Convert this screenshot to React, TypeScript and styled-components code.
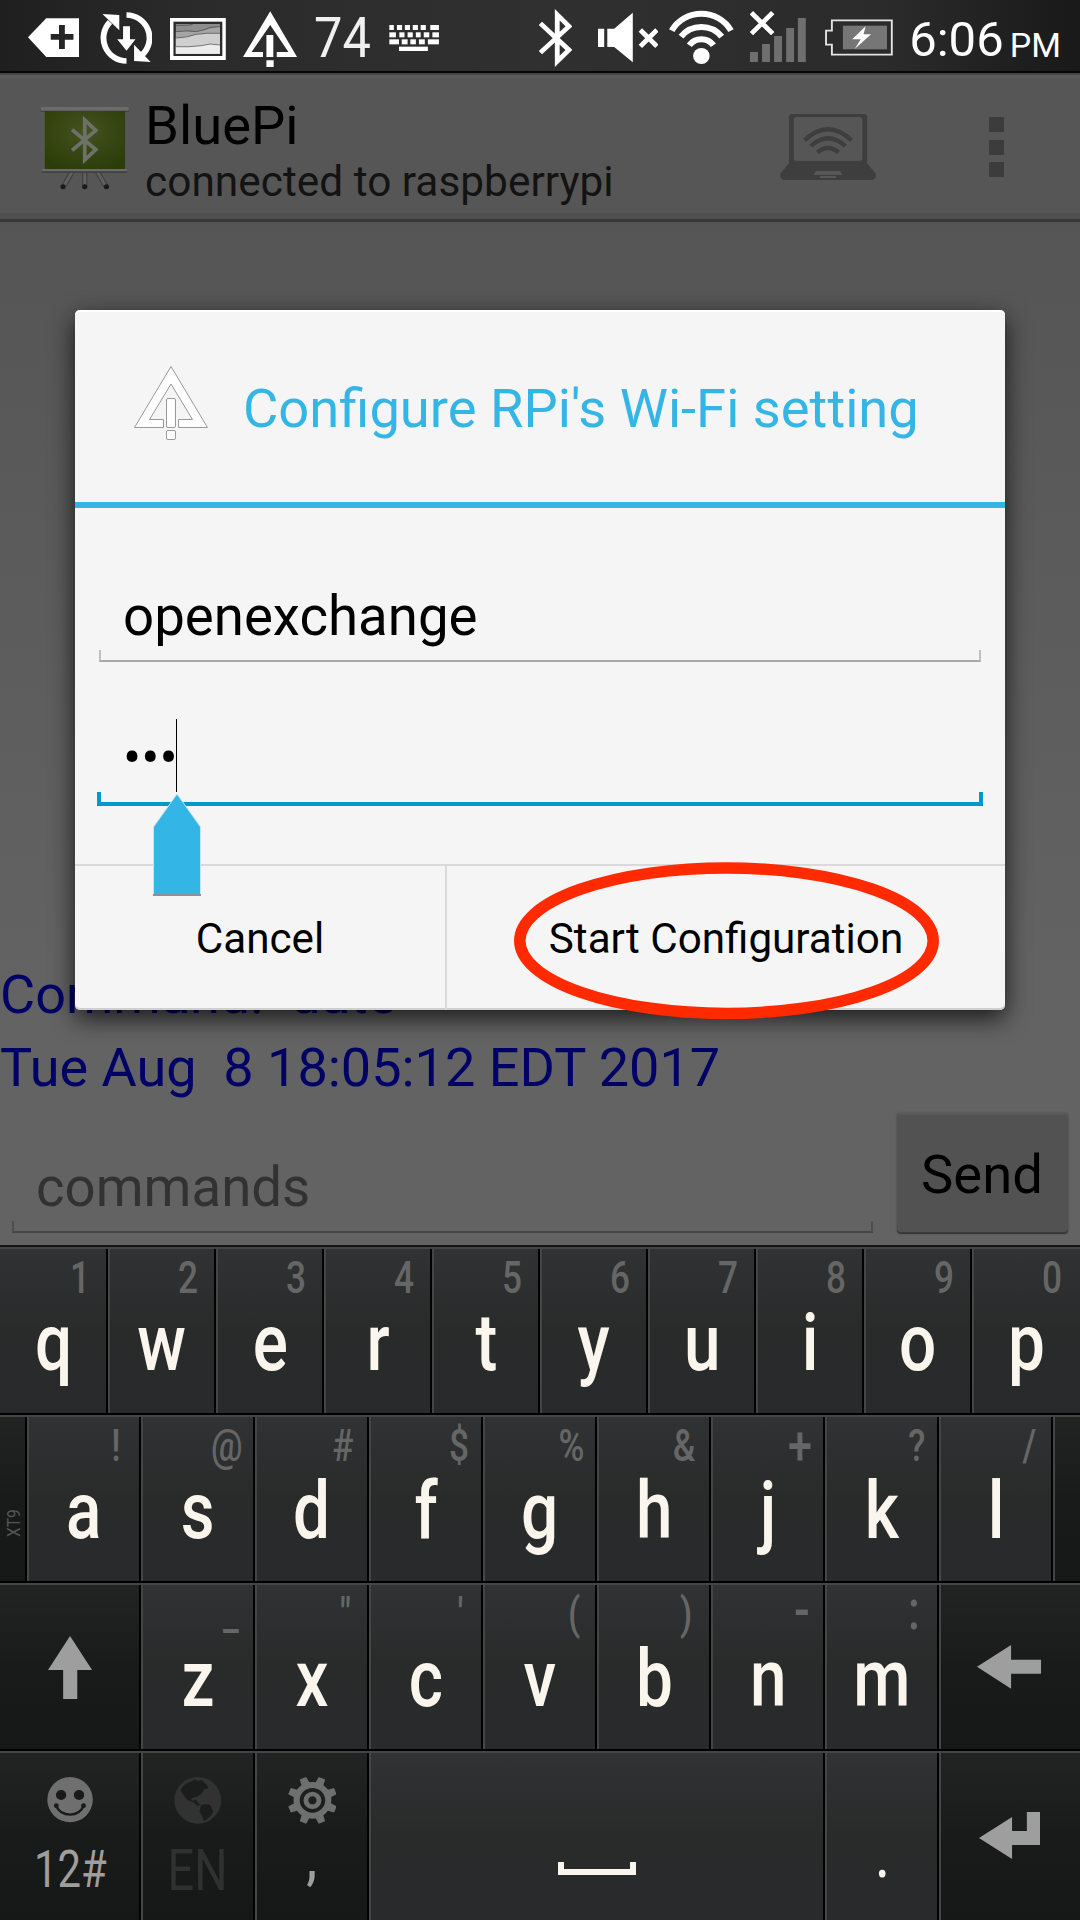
import React from "react";
import styled, { createGlobalStyle } from "styled-components";

const GlobalStyle = createGlobalStyle`
  * { box-sizing: border-box; }
  body { margin: 0; background: #1a1b1b; }
`;

const Screen = styled.div`
  position: relative;
  width: 1080px;
  height: 1920px;
  overflow: hidden;
  display: flex;
  flex-direction: column;
  font-family: Roboto, "Noto Sans", sans-serif;
  background: linear-gradient(#555 222px, #636363 1000px);
`;

/* ---------- drawings ---------- */

const Svg = styled.svg<{ $left?: number; $top?: number }>`
  display: block;
  flex: none;
  margin-left: ${(p) => p.$left ?? 0}px;
  margin-top: ${(p) => p.$top ?? 0}px;
`;

type DrawingProps = {
  box: [number, number, number, number];
  left?: number;
  top?: number;
  fill?: string;
  children: React.ReactNode;
};

/* Drawings use a fine grid: 2.9037 units per px across, 3 units per px down. */
const Drawing = ({ box, left, top, fill = "#fff", children }: DrawingProps) => (
  <Svg
    $left={left}
    $top={top}
    width={box[2] / 2.9037}
    height={box[3] / 3}
    viewBox={box.join(" ")}
    preserveAspectRatio="none"
    fill={fill}
  >
    {children}
  </Svg>
);

/* ---------- status bar ---------- */

const StatusBar = styled.header`
  height: 75px;
  flex: none;
  display: flex;
  align-items: flex-start;
  background: linear-gradient(
      transparent 71px,
      #060606 71px,
      #060606 73px,
      #464646 73px
    ),
    linear-gradient(90deg, #1f1f1f, #2b2b2b 18%, #303030 50%, #2b2b2b 82%, #191919);
`;

const StatusText = styled.span<{ $size: number; $left: number; $width: number; $x?: number; $color?: string }>`
  flex: none;
  width: ${(p) => p.$width}px;
  margin-left: ${(p) => p.$left}px;
  font-size: ${(p) => p.$size}px;
  line-height: ${(p) => 2 * (56.8 - 0.3418 * p.$size)}px;
  color: ${(p) => p.$color ?? "#fff"};
  white-space: nowrap;
  transform: scaleX(${(p) => p.$x ?? 1});
  transform-origin: left;
`;

const keyboardDots = [
  [1131, 75, 13], [1153, 75, 15], [1176, 75, 15], [1199, 75, 15], [1222, 75, 15], [1250, 75, 25],
  [1131, 97, 19], [1160, 97, 15], [1184, 97, 15], [1208, 97, 14], [1231, 97, 16], [1256, 97, 19],
  [1131, 118, 28], [1167, 118, 17], [1192, 118, 16], [1217, 118, 17], [1243, 118, 32],
  [1159, 140, 84],
];

const StatusIcons = () => (
  <StatusBar>
    <Drawing left={27.9} box={[81, 0, 148, 213]}>
      <path d="M81 112L134 55H229V171H134Z" />
      <path d="M171 75h17v27h25v17h-25v28h-17v-28h-24v-17h24z" fill="#262626" />
    </Drawing>
    <Drawing left={20.7} box={[289, 0, 153, 213]}>
      <path d="M366 45A67 69 0 0 1 412 164M366 183A67 69 0 0 1 318 66" fill="none" stroke="#fff" strokeWidth="17" />
      <path d="M388 134V183L436 186Z M296 42L345 45V91Z M356 79h20v39h16L366 152L339 118h17z" />
    </Drawing>
    <Drawing left={17.9} box={[494, 0, 163, 213]}>
      <rect x="494" y="54" width="162" height="126" />
      <rect x="504" y="65" width="142" height="103" fill="#2a2a2a" />
      <rect x="511" y="72" width="128" height="89" fill="#8d8d8d" />
      <path d="M511 95Q545 92 570 95Q595 90 639 80V161H511Z" fill="#a5a5a5" />
      <path d="M511 114Q545 113 570 103Q600 98 639 100V161H511Z" fill="#cfcfcf" />
      <path d="M511 140Q545 142 585 137Q610 128 639 135V161H511Z" fill="#ececec" />
      <path
        d="M511 76H545L560 73M511 95Q545 90 570 95Q595 90 610 82L639 80M511 114Q545 113 570 103Q600 98 639 100M511 140Q545 142 585 137Q610 128 639 135"
        fill="none" stroke="#444" strokeWidth="2"
      />
    </Drawing>
    <Drawing left={16.9} box={[706, 0, 158, 213]}>
      <path d="M785 34L863 171H804V156H838L785 75L731 156H764V171H706Z" />
      <path d="M774 105h20v66h-20zM774 181h21v20h-21z" />
    </Drawing>
    <StatusText $size={55} $left={16.5} $width={60} $x={0.92} $color="#f0f0f0">74</StatusText>
    <Drawing left={15} box={[1130, 0, 146, 213]}>
      {keyboardDots.map(([x, y, w]) => (
        <rect key={`${x}-${y}`} x={x} y={y} width={w} height={y === 140 ? 13 : 15} />
      ))}
    </Drawing>
    <Drawing left={99.3} box={[-8, 0, 98, 213]}>
      <path d="M-4 70L79 150L45 184V44L79 79L-4 158" fill="none" stroke="#fff" strokeWidth="14" />
    </Drawing>
    <Drawing left={25.4} box={[168, 0, 176, 213]}>
      <path d="M168 86h18v55h-18zM195 86h20L269 38V187L215 141h-20z" />
      <path d="M291 90L339 139M339 90L291 139" stroke="#fff" strokeWidth="14" />
    </Drawing>
    <Drawing left={10.6} box={[373, 0, 188, 213]}>
      <path
        d="M381 92A98 98 0 0 1 553 92M408 110A75 75 0 0 1 526 110M432 136A43 43 0 0 1 502 136"
        fill="none" stroke="#fff" strokeWidth="18"
      />
      <circle cx="467" cy="168" r="24" />
    </Drawing>
    <Drawing left={15.9} box={[607, 0, 163, 213]}>
      <path
        d="M607 156h23v30h-23zM642 132h23v54h-23zM677 108h23v78h-23zM712 84h23v102h-23zM746 54h23v132h-23z"
        fill="#6f6f6f"
      />
      <path d="M611 38L673 101M673 38L611 101" stroke="#2b2b2b" strokeWidth="22" />
      <path d="M611 38L673 101M673 38L611 101" stroke="#fff" strokeWidth="14" />
    </Drawing>
    <Drawing left={19.3} box={[828, 0, 198, 213]}>
      <path d="M848 61H1022V164H848V134H831V92H848Z" fill="none" stroke="#e3e3e3" strokeWidth="5.5" />
      <rect x="880" y="77" width="128" height="71" fill="#767676" />
      <path d="M946 79L907 118H932L914 147L962 103H940Z" />
    </Drawing>
    <StatusText $size={49} $left={16} $width={98}>6:06</StatusText>
    <StatusText $size={34} $left={2.5} $width={60}>PM</StatusText>
  </StatusBar>
);

/* ---------- action bar ---------- */

const ActionBar = styled.div`
  height: 147px;
  flex: none;
  display: flex;
  align-items: flex-start;
  background: linear-gradient(
    #5b5b5b 3px,
    #565656 3px,
    #565656 138px,
    #505050 138px,
    #505050 144px,
    #383838 144px
  );
`;

const Titles = styled.div`
  width: 599px;
  padding-top: 19px;
  margin-left: 15px;
  flex: none;
`;

const Title = styled.div`
  font-size: 54.4px;
  line-height: 64px;
  color: #000;
`;

const Subtitle = styled.div`
  font-size: 42.4px;
  line-height: 48px;
  color: #131313;
  white-space: nowrap;
`;

const Overflow = styled.div`
  display: flex;
  flex-direction: column;
  gap: 7.5px;
  margin: 42px 0 0 113px;
  i {
    width: 15px;
    height: 15px;
    background: #3c3c3c;
  }
`;

const AppBar = () => (
  <ActionBar>
    <Drawing left={40.2} top={29} box={[117, 312, 261, 264]}>
      <defs>
        <radialGradient id="board" cx="50%" cy="35%" r="70%">
          <stop offset="0" stopColor="#44521f" />
          <stop offset="1" stopColor="#2b3d08" />
        </radialGradient>
      </defs>
      <path d="M210 516L186 558M247 516V558M284 516L308 558" stroke="#3d3d3d" strokeWidth="15" />
      <path d="M210 516L186 558M247 516V558M284 516L308 558" stroke="#5f5f5f" strokeWidth="9" />
      <path d="M119 325h256v10h-256zM123 511h247v7h-247z" fill="#3c3c3c" />
      <rect x="131" y="333" width="233" height="175" fill="url(#board)" />
      <rect x="119" y="321" width="256" height="11" rx="2" fill="#6b6b6b" />
      <rect x="123" y="507" width="247" height="7" rx="2" fill="#6b6b6b" />
      <circle cx="184" cy="560" r="7.5" fill="#1a1a1a" />
      <circle cx="247" cy="560" r="7.5" fill="#1a1a1a" />
      <circle cx="310" cy="560" r="7.5" fill="#1a1a1a" />
      <path d="M210 389L279 449L247 480V360L279 391L210 451" fill="none" stroke="#6e7168" strokeWidth="11" />
    </Drawing>
    <Titles>
      <Title>BluePi</Title>
      <Subtitle>connected to raspberrypi</Subtitle>
    </Titles>
    <Drawing left={35.5} top={39} box={[697, 342, 280, 198]} fill="#3e3e3e">
      <path d="M733 342H940Q950 342 950 352V490L974 520Q980 532 965 540H708Q693 532 699 520L723 490V352Q723 342 733 342Z" />
      <rect x="737" y="351" width="199" height="132" rx="9" fill="#565656" />
      <path
        d="M768 421Q836 355 905 421M787 438Q836 391 887 438M806 457Q836 431 867 457"
        fill="none" stroke="#3e3e3e" strokeWidth="13"
      />
      <path d="M801 513H872L878 525H794ZM813 528H860V534H813Z" fill="#575757" />
    </Drawing>
    <Overflow><i /><i /><i /></Overflow>
  </ActionBar>
);

/* ---------- console ---------- */

const Console = styled.main`
  flex: 1;
  display: flex;
  flex-direction: column;
  justify-content: flex-end;
  color: #000066;
  font-size: 54px;
  line-height: 73px;
  white-space: pre;
`;

const Composer = styled.div`
  height: 141px;
  flex: none;
  display: flex;
  padding: 9px 12px 12px;
  gap: 24px;
`;

const Input = styled.div`
  width: 861px;
  display: flex;
  flex-direction: column;
  justify-content: flex-end;
`;

const InputText = styled.div<{ $color: string; $height: number }>`
  height: ${(p) => p.$height}px;
  line-height: ${(p) => p.$height}px;
  font-size: 54.6px;
  color: ${(p) => p.$color};
  padding-left: 24px;
`;

const Underline = styled.div<{ $color: string; $side?: string; $size: number }>`
  height: ${(p) => (p.$size === 4 ? 14 : 12)}px;
  border: solid ${(p) => p.$side ?? p.$color};
  border-width: 0 ${(p) => p.$size}px ${(p) => p.$size}px;
  border-bottom-color: ${(p) => p.$color};
`;

const SendButton = styled.button`
  width: 171px;
  height: 120px;
  border: 0;
  border-radius: 4px;
  background: #525252;
  box-shadow: inset 0 2px #595959, inset 0 -1px #3a3a3a, 0 1px 1px #333, 0 0 2px #494949;
  color: #000;
  font: 54.4px/1 Roboto, sans-serif;
  padding: 4px 1px 0 0;
`;

/* ---------- dialog ---------- */

const Dialog = styled.section`
  position: absolute;
  left: 75px;
  top: 310px;
  width: 930px;
  height: 700px;
  border-radius: 5px;
  background: #f5f5f5;
  box-shadow: inset 0 2px #fff, inset 0 -2px #cfcfcf, 0 8px 24px rgba(0, 0, 0, 0.75);
  display: flex;
  flex-direction: column;
`;

const DialogHeader = styled.div`
  height: 198px;
  flex: none;
  display: flex;
  align-items: center;
  border-bottom: 6px solid #33b5e5;
  padding-left: 58px;
`;

const DialogTitle = styled.h1`
  margin: 5px 0 0 34px;
  font-size: 54.3px;
  font-weight: 400;
  line-height: 64px;
  color: #33b5e5;
  white-space: nowrap;
`;

const Fields = styled.div`
  height: 356px;
  flex: none;
  padding: 72px 24px 0;
`;

const Lifted = styled.div`
  margin-top: -2px;
`;

const PasswordField = styled.div`
  margin: 57px -2px 0;
`;

const Password = styled.div`
  height: 73px;
  display: flex;
  padding-left: 26px;
  font-size: 54px;
  line-height: 77px;
  color: #000;
`;

const Caret = styled.span`
  width: 1px;
  height: 73px;
  background: #000;
`;

const Dots = styled.span`
  width: 53px;
  white-space: nowrap;
`;

const DialogButtons = styled.div`
  flex: 1;
  display: flex;
  border-top: 2px solid #d9d9d9;
`;

const DialogButton = styled.button<{ $width: number }>`
  width: ${(p) => p.$width}px;
  border: 0;
  background: none;
  padding: 3px 0 0;
  font: 42.2px/1 Roboto, sans-serif;
  color: #000;
  & + & {
    border-left: 2px solid #d9d9d9;
  }
`;

const Overlay = styled.svg<{ $x: number; $y: number }>`
  position: absolute;
  left: ${(p) => p.$x}px;
  top: ${(p) => p.$y}px;
`;

/* ---------- keyboard ---------- */

const Keyboard = styled.div`
  height: 675px;
  flex: none;
  border-top: 2px solid #141414;
  background: #000;
`;

const Row = styled.div`
  height: 168px;
  display: flex;
  border-top: 2px solid #454545;
  padding-bottom: 2px;
  &:last-child {
    height: 169px;
    padding-bottom: 0;
  }
`;

const Key = styled.div<{ $width: number; $dark?: boolean }>`
  width: ${(p) => p.$width}px;
  flex: none;
  display: flex;
  flex-direction: column;
  align-items: center;
  border-left: 2px solid #454545;
  border-right: 2px solid #000;
  background: ${(p) =>
    p.$dark
      ? "linear-gradient(#222423, #191a1a 50%, #161717)"
      : "linear-gradient(#303233, #292b2b 50%, #282a2b)"};
  &:first-child {
    border-left: 0;
    padding-left: 2px;
  }
  &:last-child {
    border-right: 0;
    padding-right: 2px;
  }
`;

const Hint = styled.span<{ $size: number; $inset: number; $lift: number }>`
  align-self: flex-end;
  height: 57px;
  line-height: 58px;
  font-size: ${(p) => p.$size}px;
  font-weight: 500;
  color: #666;
  margin: ${(p) => `${-p.$lift}px ${p.$inset}px ${p.$lift}px 0`};
  transform: scaleX(0.8);
  transform-origin: right;
`;

const Letter = styled.span`
  height: 73px;
  line-height: 75px;
  font-size: 80px;
  font-weight: 500;
  color: #faf6ee;
  transform: scaleX(0.82);
`;

const Caption = styled.span<{ $size: number; $top: number; $color: string; $bold?: boolean }>`
  height: 60px;
  line-height: 60px;
  margin-top: ${(p) => p.$top}px;
  font-size: ${(p) => p.$size}px;
  font-weight: ${(p) => (p.$bold ? 500 : 400)};
  color: ${(p) => p.$color};
  transform: scaleX(0.82);
  white-space: nowrap;
`;

const Vertical = styled.span`
  writing-mode: vertical-rl;
  transform: rotate(180deg) scaleY(0.86);
  font-size: 18px;
  line-height: 20px;
  color: #565656;
  margin: 90px 0 0 1px;
`;

const SpaceMark = styled.div`
  width: 78px;
  height: 13px;
  margin-top: 109px;
  border: 6px solid #faf6ee;
  border-top: 0;
`;

/* Right inset, size and lift of the hints that differ from the digits. */
const hintStyle: Record<string, [number, number?, number?]> = {
  "!": [18], "@": [11], "#": [13], $: [12], "%": [11], "&": [14],
  "+": [11, 54], "?": [12], "/": [15],
  _: [14], '"': [16], "'": [18], "(": [15], ")": [17],
  "-": [13, 58, 4], ":": [17, 56, 4],
};

const letters = (chars: string, hints: string, width: number) =>
  [...chars].map((c, i) => {
    const [inset, size = 44, lift = 0] = hintStyle[hints[i]] ?? [16];
    return (
      <Key key={c} $width={width}>
        <Hint $inset={inset} $size={size} $lift={lift}>{hints[i]}</Hint>
        <Letter>{c}</Letter>
      </Key>
    );
  });

const GEAR_TEETH = [22.5, 67.5, 112.5, 157.5, 202.5, 247.5, 292.5, 337.5];

export default function App() {
  return (
    <>
      <GlobalStyle />
      <Screen>
        <StatusIcons />
        <AppBar />
        <Console>
          <div>{"Command:  date"}</div>
          <div>{"Tue Aug  8 18:05:12 EDT 2017"}</div>
        </Console>
        <Composer>
          <Input>
            <InputText $color="#323232" $height={67}>commands</InputText>
            <Underline $color="#454545" $side="#4e4e4e" $size={2} />
          </Input>
          <SendButton>Send</SendButton>
        </Composer>

        <Keyboard>
          <Row>{letters("qwertyuiop", "1234567890", 108)}</Row>
          <Row>
            <Key $width={27} $dark>
              <Vertical>XT9</Vertical>
            </Key>
            {letters("asdfghjkl", "!@#$%&+?/", 114)}
            <Key $width={27} $dark />
          </Row>
          <Row>
            <Key $width={141} $dark>
              <Drawing top={51} box={[139, 707, 129, 190]} fill="#9e9e9e">
                <path d="M203 707L139 809H183V897H224V809H267Z" />
              </Drawing>
            </Key>
            {letters("zxcvbnm", "_\"'()-:", 114)}
            <Key $width={141} $dark>
              <Drawing top={60} box={[1269, 736, 187, 131]} fill="#9e9e9e">
                <path d="M1269 801L1368 736V780H1455V822H1368V867Z" />
              </Drawing>
            </Key>
          </Row>
          <Row>
            <Key $width={141} $dark>
              <Drawing top={24} box={[137, 173, 134, 137]} fill="#6f6f6f">
                <ellipse cx="204" cy="241" rx="66" ry="68" />
                <g fill="#191a1a">
                  <circle cx="178" cy="227" r="15" />
                  <circle cx="230" cy="227" r="15" />
                  <circle cx="164" cy="259" r="7" />
                  <circle cx="243" cy="259" r="7" />
                </g>
                <path d="M164 260Q174 285 204 286Q233 285 243 260" fill="none" stroke="#191a1a" strokeWidth="7" />
              </Drawing>
              <Caption $size={51} $top={17} $color="#9e9e9e">12#</Caption>
            </Key>
            <Key $width={114} $dark>
              <Drawing top={24} box={[506, 172, 139, 141]} fill="#323232">
                <ellipse cx="575" cy="242" rx="68" ry="70" />
                <path
                  d="M525 213Q532 191 560 184L566 178L574 184L588 182L592 188L602 196L606 206L594 208L586 222L572 232L556 236L558 244L570 240L576 250L584 256L574 258L562 248L546 242L536 230ZM584 258Q600 250 612 258L620 276Q610 296 592 304L588 288L580 276Z"
                  fill="#1b1c1c"
                />
              </Drawing>
              <Caption $size={57} $top={17} $color="#303030">EN</Caption>
            </Key>
            <Key $width={114} $dark>
              <Drawing top={23} box={[835, 170, 142, 146]} fill="#6f6f6f">
                {GEAR_TEETH.map((a) => (
                  <path key={a} d="M896 171H916L919 198H893Z" transform={`rotate(${a} 906 243)`} />
                ))}
                <circle cx="906" cy="243" r="46" fill="none" stroke="#6f6f6f" strokeWidth="18" />
                <circle cx="906" cy="243" r="19" fill="none" stroke="#6f6f6f" strokeWidth="14" />
              </Drawing>
              <Caption $size={60} $top={3} $color="#9e9e9e" $bold>,</Caption>
            </Key>
            <Key $width={456}>
              <SpaceMark />
            </Key>
            <Key $width={114}>
              <Caption $size={72} $top={70} $color="#faf6ee">.</Caption>
            </Key>
            <Key $width={141} $dark>
              <Drawing top={59} box={[1272, 276, 180, 141]} fill="#9e9e9e">
                <path d="M1272 354L1368 291V333H1411V276H1452V375H1368V417Z" />
              </Drawing>
            </Key>
          </Row>
        </Keyboard>

        <Dialog>
          <DialogHeader>
            <Svg $top={-7} width="76" height="76" viewBox="0 0 76 76" fill="#fff" stroke="#999" strokeWidth="1" strokeLinejoin="round">
              <path d="M38 1.5L74.5 62.5H45.5V54.5H59.5L38 19L16.5 54.5H30.5V62.5H1.5Z" />
              <rect x="33.5" y="33.5" width="9" height="29" rx="1.5" />
              <rect x="33.5" y="65.5" width="9" height="9" rx="1.5" />
            </Svg>
            <DialogTitle>Configure RPi's Wi-Fi setting</DialogTitle>
          </DialogHeader>
          <Fields>
            <InputText $color="#000" $height={72}>openexchange</InputText>
            <Lifted>
              <Underline $color="#a8a8a8" $side="#c0c0c0" $size={2} />
            </Lifted>
            <PasswordField>
              <Password>
                <Dots>•••</Dots>
                <Caret />
              </Password>
              <Underline $color="#0099cc" $size={4} />
            </PasswordField>
          </Fields>
          <DialogButtons>
            <DialogButton $width={370}>Cancel</DialogButton>
            <DialogButton $width={560}>Start Configuration</DialogButton>
          </DialogButtons>
        </Dialog>

        <Overlay $x={152} $y={793} width="50" height="104">
          <path d="M25 1L48.5 34V102H1.5V34Z" fill="#33b5e5" stroke="#bfe6f5" strokeWidth="1" />
          <path d="M1 101H49V103H1Z" fill="#8f8f9b" />
        </Overlay>
        <Overlay $x={510} $y={858} width="434" height="166">
          <ellipse cx="216.5" cy="82.7" rx="206.7" ry="72.7" fill="none" stroke="#ff2a00" strokeWidth="11.5" />
        </Overlay>
      </Screen>
    </>
  );
}
